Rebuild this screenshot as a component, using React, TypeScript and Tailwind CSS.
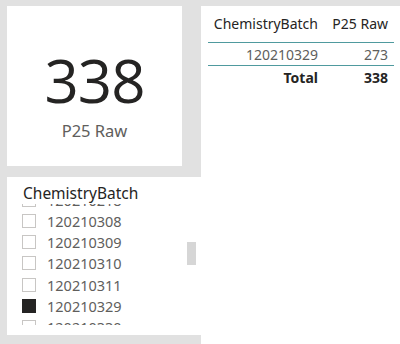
import React from "react";

const ITEMS = ["120210218", "120210308", "120210309", "120210310", "120210311", "120210329", "120210330"];
const SELECTED = "120210329";

function CardVisual() {
  return (
    <div className="w-[175px] h-[160px] bg-white flex flex-col items-center">
      <div className="mt-[36px] text-[60px] leading-[76px] text-[#252423] tracking-[-1px]" style={{ fontFamily: "'Open Sans', sans-serif" }}>
        338
      </div>
      <div className="mt-[2px] text-[16.5px] leading-[22px] text-[#605e5c]">P25 Raw</div>
    </div>
  );
}

function Slicer() {
  return (
    <div className="w-[194px] h-[158px] bg-white relative">
      <div className="pl-[16px] pt-[6px] text-[15.5px] leading-[21px] text-[#252423]">ChemistryBatch</div>
      <div className="h-[121px] overflow-hidden">
        <div className="-mt-[15px] flex flex-col">
          {ITEMS.map((item) => (
            <div key={item} className="h-[21.25px] flex items-center pl-[15px] gap-[11px]">
              <span
                className={
                  item === SELECTED
                    ? "w-[14px] h-[14px] bg-[#252423] border border-[#252423]"
                    : "w-[14px] h-[14px] bg-white border border-[#c8c6c4]"
                }
              />
              <span className="text-[14.5px] leading-[20px] text-[#605e5c]">{item}</span>
            </div>
          ))}
        </div>
      </div>
      <div className="absolute left-[180px] top-[65px] w-[9px] h-[23px] bg-[#d6d6d6]" />
    </div>
  );
}

function Table() {
  return (
    <div className="ml-[7px] w-[186px] pt-[8px] text-[14px] leading-[20px]">
      <div className="flex border-b border-[#4f9a9e] pb-[8px] text-[#252423]">
        <div className="w-[110px] text-right">ChemistryBatch</div>
        <div className="w-[70px] text-right">P25 Raw</div>
      </div>
      <div className="flex border-b border-[#4f9a9e] pt-[2px] text-[#605e5c]">
        <div className="w-[110px] text-right">120210329</div>
        <div className="w-[70px] text-right">273</div>
      </div>
      <div className="flex pt-[2px] font-bold text-[#252423]">
        <div className="w-[110px] text-right">Total</div>
        <div className="w-[70px] text-right">338</div>
      </div>
    </div>
  );
}

export default function App() {
  return (
    <div className="w-[400px] h-[344px] bg-[#e1e1e1] flex overflow-hidden" style={{ fontFamily: "'Noto Sans', 'Open Sans', sans-serif" }}>
      <div className="ml-[7px] pt-[6px] flex flex-col gap-[11px]">
        <CardVisual />
        <Slicer />
      </div>
      <div className="flex-1 mt-[6px] bg-white">
        <Table />
      </div>
    </div>
  );
}
